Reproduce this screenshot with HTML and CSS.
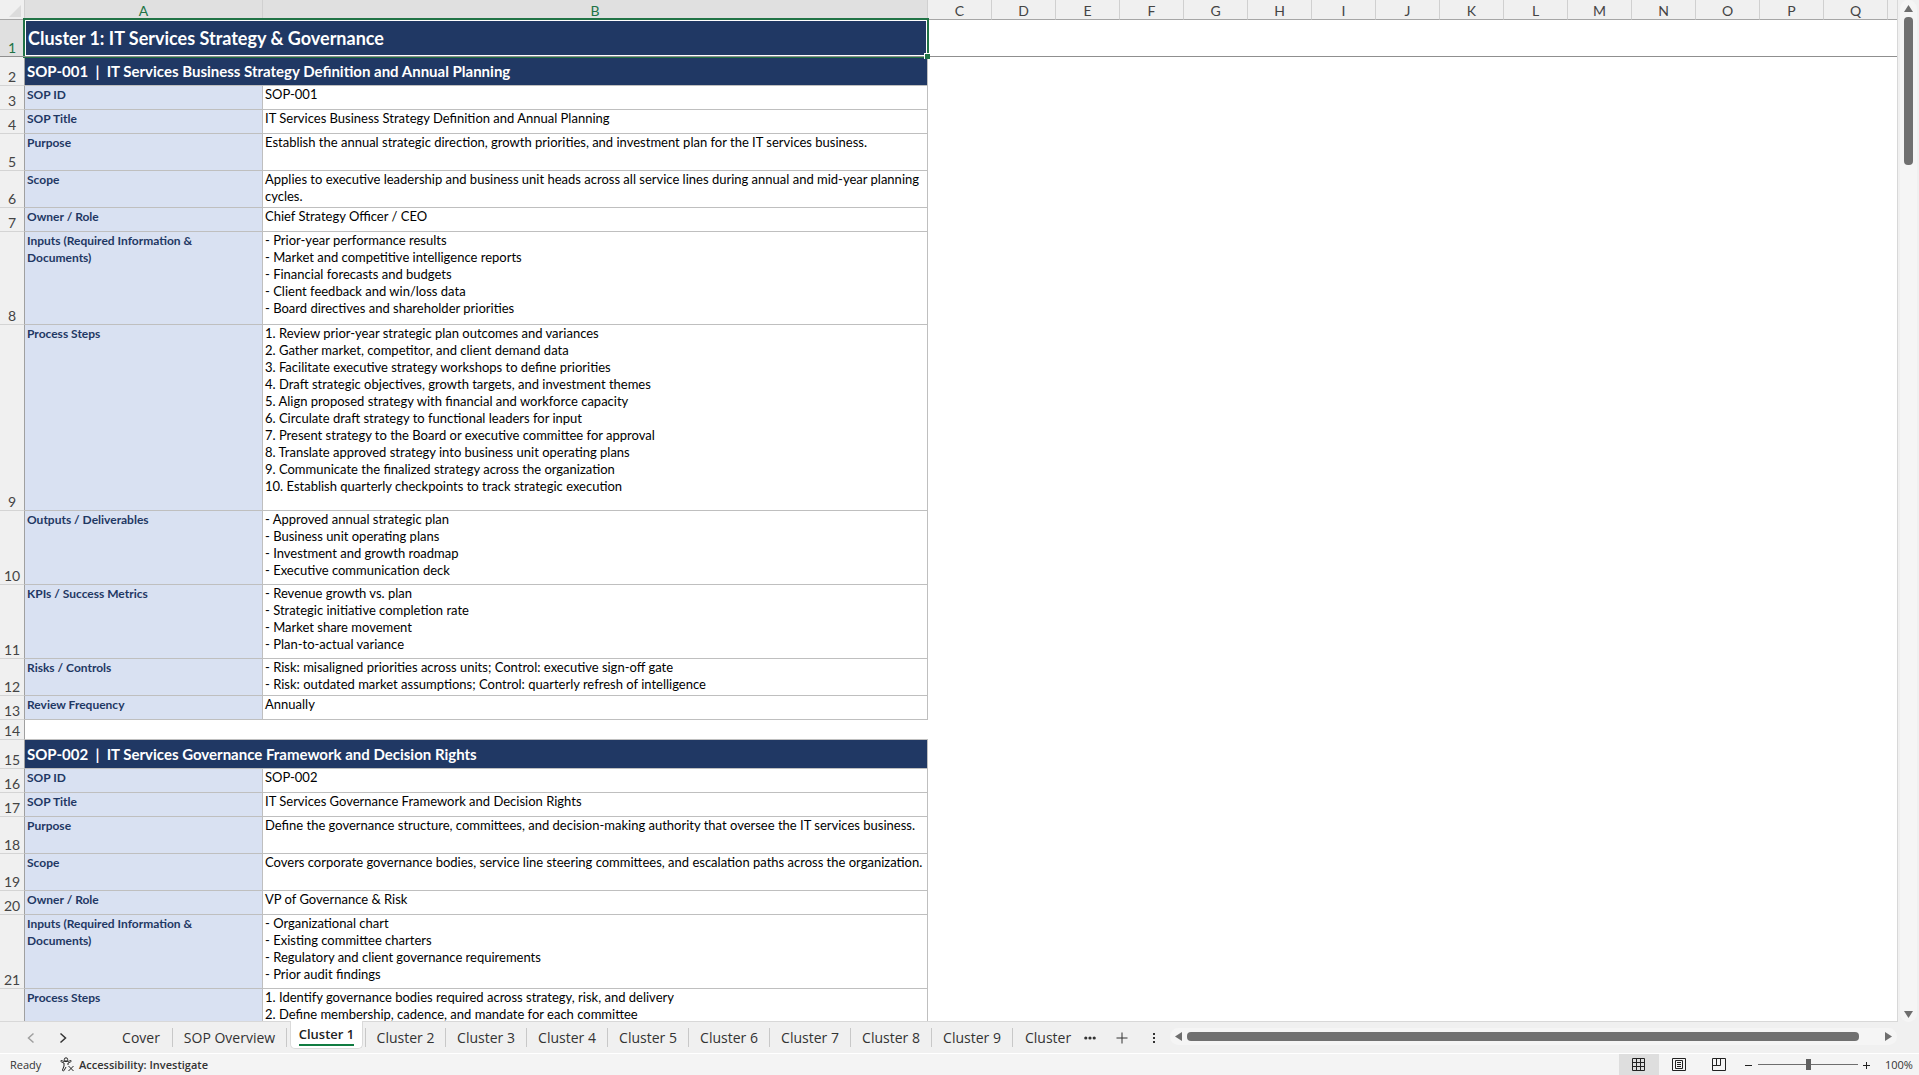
FILE: index.html
```html
<!DOCTYPE html>
<html lang="en">
<head>
    <meta charset="UTF-8">
    <meta name="viewport" content="width=device-width, initial-scale=1.0">
    <title>SOP Workbook</title>
    <link rel="stylesheet" href="styles.css">
</head>
<body>
    <main class="workspace">
        <div class="grid">
            <table class="sheet">
                <colgroup>
                    <col class="col-rows">
                    <col class="col-a">
                    <col class="col-b">
                    <col class="col-std" span="15">
                    <col>
                </colgroup>
                <thead>
                    <tr>
                        <th class="corner"><svg width="12" height="12" viewBox="0 0 12 12"><path d="M12 0v12H0z" fill="#dcdcdc"/></svg></th>
                        <th class="selected">A</th>
                        <th class="selected">B</th>
                        <th>C</th><th>D</th><th>E</th><th>F</th><th>G</th>
                        <th>H</th><th>I</th><th>J</th><th>K</th><th>L</th>
                        <th>M</th><th>N</th><th>O</th><th>P</th><th>Q</th>
                        <th class="last"></th>
                    </tr>
                </thead>
                <tbody>
                    <tr class="title-row">
                        <th class="selected">1</th>
                        <td class="title" colspan="2">Cluster 1: IT Services Strategy &amp; Governance<span class="selection"></span><span class="fill-handle"></span></td>
                        <td class="frozen" colspan="16"></td>
                    </tr>
                    <tr class="sop-row"><th>2</th><td class="sop" colspan="2">SOP-001&nbsp; |&nbsp; IT Services Business Strategy Definition and Annual Planning</td></tr>
                    <tr class="lines-1"><th>3</th><td class="label">SOP ID</td><td>SOP-001</td></tr>
                    <tr class="lines-1"><th>4</th><td class="label">SOP Title</td><td>IT Services Business Strategy Definition and Annual Planning</td></tr>
                    <tr class="lines-2"><th>5</th><td class="label">Purpose</td><td>Establish the annual strategic direction, growth priorities, and investment plan for the IT services business.</td></tr>
                    <tr class="lines-2"><th>6</th><td class="label">Scope</td><td>Applies to executive leadership and business unit heads across all service lines during annual and mid-year planning cycles.</td></tr>
                    <tr class="lines-1"><th>7</th><td class="label">Owner / Role</td><td>Chief Strategy Officer / CEO</td></tr>
                    <tr class="lines-5">
                        <th>8</th>
                        <td class="label">Inputs (Required Information &amp;<br>Documents)</td>
                        <td>- Prior-year performance results<br>
                            - Market and competitive intelligence reports<br>
                            - Financial forecasts and budgets<br>
                            - Client feedback and win/loss data<br>
                            - Board directives and shareholder priorities</td>
                    </tr>
                    <tr class="lines-10">
                        <th>9</th>
                        <td class="label">Process Steps</td>
                        <td>1. Review prior-year strategic plan outcomes and variances<br>
                            2. Gather market, competitor, and client demand data<br>
                            3. Facilitate executive strategy workshops to define priorities<br>
                            4. Draft strategic objectives, growth targets, and investment themes<br>
                            5. Align proposed strategy with financial and workforce capacity<br>
                            6. Circulate draft strategy to functional leaders for input<br>
                            7. Present strategy to the Board or executive committee for approval<br>
                            8. Translate approved strategy into business unit operating plans<br>
                            9. Communicate the finalized strategy across the organization<br>
                            10. Establish quarterly checkpoints to track strategic execution</td>
                    </tr>
                    <tr class="lines-4">
                        <th>10</th>
                        <td class="label">Outputs / Deliverables</td>
                        <td>- Approved annual strategic plan<br>
                            - Business unit operating plans<br>
                            - Investment and growth roadmap<br>
                            - Executive communication deck</td>
                    </tr>
                    <tr class="lines-4">
                        <th>11</th>
                        <td class="label">KPIs / Success Metrics</td>
                        <td>- Revenue growth vs. plan<br>
                            - Strategic initiative completion rate<br>
                            - Market share movement<br>
                            - Plan-to-actual variance</td>
                    </tr>
                    <tr class="lines-2">
                        <th>12</th>
                        <td class="label">Risks / Controls</td>
                        <td>- Risk: misaligned priorities across units; Control: executive sign-off gate<br>
                            - Risk: outdated market assumptions; Control: quarterly refresh of intelligence</td>
                    </tr>
                    <tr class="lines-1"><th>13</th><td class="label">Review Frequency</td><td>Annually</td></tr>
                    <tr class="blank-row"><th>14</th><td class="blank" colspan="2"></td></tr>
                    <tr class="sop-row"><th>15</th><td class="sop" colspan="2">SOP-002&nbsp; |&nbsp; IT Services Governance Framework and Decision Rights</td></tr>
                    <tr class="lines-1"><th>16</th><td class="label">SOP ID</td><td>SOP-002</td></tr>
                    <tr class="lines-1"><th>17</th><td class="label">SOP Title</td><td>IT Services Governance Framework and Decision Rights</td></tr>
                    <tr class="lines-2"><th>18</th><td class="label">Purpose</td><td>Define the governance structure, committees, and decision-making authority that oversee the IT services business.</td></tr>
                    <tr class="lines-2"><th>19</th><td class="label">Scope</td><td>Covers corporate governance bodies, service line steering committees, and escalation paths across the organization.</td></tr>
                    <tr class="lines-1"><th>20</th><td class="label">Owner / Role</td><td>VP of Governance &amp; Risk</td></tr>
                    <tr class="lines-4">
                        <th>21</th>
                        <td class="label">Inputs (Required Information &amp;<br>Documents)</td>
                        <td>- Organizational chart<br>
                            - Existing committee charters<br>
                            - Regulatory and client governance requirements<br>
                            - Prior audit findings</td>
                    </tr>
                    <tr class="lines-10">
                        <th></th>
                        <td class="label">Process Steps</td>
                        <td>1. Identify governance bodies required across strategy, risk, and delivery<br>
                            2. Define membership, cadence, and mandate for each committee</td>
                    </tr>
                </tbody>
            </table>
        </div>
        <div class="scroll-v">
            <button class="scroll-btn" aria-label="Scroll up"><svg width="9" height="8" viewBox="0 0 9 8"><path d="M4.500 0 9 7H0z"/></svg></button>
            <div class="thumb-v"></div>
            <button class="scroll-btn scroll-down" aria-label="Scroll down"><svg width="9" height="8" viewBox="0 0 9 8"><path d="M0 1h9L4.500 8z"/></svg></button>
        </div>
    </main>

    <nav class="tab-bar">
        <div class="tab-nav">
            <button aria-label="Previous sheet" class="muted"><svg width="8" height="12" viewBox="0 0 8 12"><path d="M6.500 1.500 1.500 6l5 4.500"/></svg></button>
            <button aria-label="Next sheet"><svg width="8" height="12" viewBox="0 0 8 12"><path d="M1.500 1.500l5 4.500-5 4.500"/></svg></button>
        </div>
        <div class="tabs">
            <button class="tab tab-cover">Cover</button>
            <button class="tab tab-overview">SOP Overview</button>
            <button class="tab active"><span>Cluster 1</span></button>
            <button class="tab">Cluster 2</button>
            <button class="tab">Cluster 3</button>
            <button class="tab">Cluster 4</button>
            <button class="tab">Cluster 5</button>
            <button class="tab">Cluster 6</button>
            <button class="tab">Cluster 7</button>
            <button class="tab">Cluster 8</button>
            <button class="tab">Cluster 9</button>
            <button class="tab cut">Cluster 10</button>
        </div>
        <div class="tab-tools">
            <button aria-label="More sheets"><svg width="12" height="12" viewBox="0 0 12 12"><g fill="#333"><circle cx="1.800" cy="6" r="1.600"/><circle cx="6" cy="6" r="1.600"/><circle cx="10.200" cy="6" r="1.600"/></g></svg></button>
            <button aria-label="New sheet"><svg width="12" height="12" viewBox="0 0 12 12"><path d="M6 .5v11M.5 6h11"/></svg></button>
            <button aria-label="Resize tabs"><svg width="4" height="12" viewBox="0 0 4 12"><g fill="#333"><path d="M1 1h2v2H1zM1 5h2v2H1zM1 9h2v2H1z"/></g></svg></button>
        </div>
        <div class="scroll-h">
            <button class="scroll-btn" aria-label="Scroll left"><svg width="7" height="9" viewBox="0 0 7 9"><path d="M7 0v9L0 4.500z"/></svg></button>
            <div class="thumb-h"></div>
            <button class="scroll-btn" aria-label="Scroll right"><svg width="7" height="9" viewBox="0 0 7 9"><path d="M0 0l7 4.500L0 9z"/></svg></button>
        </div>
    </nav>

    <footer class="status-bar">
        <span class="ready">Ready</span>
        <button class="accessibility">
            <svg width="15" height="15" viewBox="0 0 15 15"><circle cx="6" cy="2.500" r="1.700"/><path d="M1 3.500c-.6.900 0 1.500 3 2.500v3l-1.500 4c0 1.200 1.200 1.200 1.700.3L6 10M11 3.500c.6.900 0 1.500-3 2.500v2M1 3.500c1 0 2 1 5 1s4-1 5-1M8.500 9l5 5M13.500 9l-5 5"/></svg>
            Accessibility: Investigate
        </button>
        <div class="views">
            <button class="current" aria-label="Normal view"><svg width="14" height="14" viewBox="0 0 14 14"><path d="M.5.5h12v12H.5zM4.500.5v12M8.500.5v12M.5 4.500h12M.5 8.500h12"/></svg></button>
            <button aria-label="Page layout view"><svg width="14" height="14" viewBox="0 0 14 14"><path d="M.5.5h13v12H.5zM3.500 2.500h7v8h-7zM5 4.500h4M5 6.500h4M5 8.500h4"/></svg></button>
            <button aria-label="Page break view"><svg width="14" height="14" viewBox="0 0 14 14"><path d="M.5.5h13v12H.5zM4.500.5v7M.5 7.500h8v-7"/></svg></button>
        </div>
        <div class="zoom">
            <button aria-label="Zoom out"><svg width="8" height="8" viewBox="0 0 8 8"><path d="M0 4.500h7"/></svg></button>
            <input type="range" min="0" max="100" value="50" aria-label="Zoom">
            <button aria-label="Zoom in"><svg width="8" height="8" viewBox="0 0 8 8"><path d="M0 4.500h7M3.500 1v7"/></svg></button>
            <span class="zoom-value">100%</span>
        </div>
    </footer>
</body>
</html>
```
FILE: styles.css
```css
* {
    box-sizing: border-box;
}

body {
    margin: 0;
    height: 100vh;
    display: flex;
    flex-direction: column;
    overflow: hidden;
    background-color: #f0f0f0;
    color: #000;
    font-family: Lato, "Liberation Sans", sans-serif;
    font-size: 13px;
}

button {
    display: flex;
    align-items: center;
    justify-content: center;
    padding: 0;
    border: 0;
    background: none;
    color: inherit;
    font: inherit;
}

svg {
    flex: none;
}

.workspace {
    flex: 1;
    min-height: 0;
    display: flex;
}

.grid {
    flex: 1;
    min-width: 0;
    overflow: hidden;
    background-color: white;
    border-right: 1px solid #d8d8d8;
    border-bottom: 1px solid #d8d8d8;
}

/* sheet */
.sheet {
    width: 100%;
    table-layout: fixed;
    border-collapse: separate;
    border-spacing: 0;
}

.col-rows {
    width: 25px;
}

.col-a {
    width: 238px;
}

.col-b {
    width: 665px;
}

.col-std {
    width: 64px;
}

th {
    padding: 0;
    background-color: #f0f0f0;
    color: #444;
    font-size: 14px;
    line-height: 16px;
    font-weight: normal;
}

thead th {
    height: 20px;
    padding-top: 2px;
    border-right: 1px solid #d0d0d0;
    border-bottom: 1px solid #a6a6a6;
}

thead .last {
    border-right: 0;
}

thead .corner {
    line-height: 0;
    text-align: right;
    padding: 2px 3px 0 0;
}

tbody th {
    border-right: 1px solid #a0a0a0;
    border-bottom: 1px solid #d4d4d4;
    vertical-align: bottom;
}

th.selected {
    background-color: #e0e0e0;
    color: #217346;
}

td {
    padding: 0 2px;
    border-right: 1px solid #bfbfbf;
    border-bottom: 1px solid #bfbfbf;
    line-height: 17px;
    vertical-align: top;
}

.label {
    background-color: #d9e1f2;
    color: #1f3864;
    font-size: 12px;
    font-weight: bold;
}

.title,
.sop {
    background-color: #203864;
    color: white;
    font-weight: bold;
    vertical-align: middle;
}

.title {
    position: relative;
    padding: 0 3px;
    font-size: 18px;
}

.sop {
    font-size: 15px;
}

.title-row th,
.title-row td {
    height: 37px;
    border-bottom-color: #8f8f8f;
}

.frozen,
.blank {
    border-right: 0;
}

.selection {
    position: absolute;
    inset: -2px -2px 0 -2px;
    border: 2px solid #217346;
    border-bottom: 0;
    box-shadow: inset 0 0 0 1px white, 0 1px 0 #8f8f8f, 0 2px 0 #217346;
}

.fill-handle {
    position: absolute;
    right: -3px;
    bottom: -3px;
    width: 6px;
    height: 6px;
    background-color: #217346;
    border-top: 1px solid white;
    border-left: 1px solid white;
}

.sop-row {
    height: 29px;
}

.blank-row {
    height: 20px;
}

.lines-1 {
    height: 24px;
}

.lines-2 {
    height: 37px;
}

.lines-4 {
    height: 74px;
}

.lines-5 {
    height: 93px;
}

.lines-10 {
    height: 186px;
}

/* scrollbars */
.scroll-v,
.scroll-h {
    display: flex;
    background-color: #f5f5f5;
    border-radius: 9px;
}

.scroll-v {
    flex-direction: column;
    align-items: center;
    width: 17px;
    margin: 0 2px;
}

.scroll-btn {
    flex: none;
    fill: #6e6e6e;
}

.scroll-v .scroll-btn {
    width: 17px;
    height: 17px;
}

.scroll-v .scroll-down {
    margin-top: auto;
}

.thumb-v {
    width: 9px;
    height: 148px;
    border-radius: 4px;
    background-color: #707070;
}

/* sheet tabs */
.tab-bar {
    display: flex;
    height: 31px;
    color: #333;
    font-family: "Open Sans", "Noto Sans", sans-serif;
    font-size: 14px;
    stroke: #333;
    stroke-width: 1;
    fill: none;
}

.tab-nav {
    display: flex;
    width: 94px;
    padding-left: 15px;
}

.tab-nav button {
    width: 32px;
    stroke-width: 1.5;
}

.tab-nav .muted {
    stroke: #a0a0a0;
}

.tabs {
    display: flex;
    align-items: center;
}

.tab {
    width: 81px;
    height: 19px;
    border-right: 1px solid #c8c8c8;
    white-space: nowrap;
}

.tab-cover {
    width: 79px;
    padding-left: 16px;
}

.tab-overview {
    width: 114px;
}

/* overlaps the bottom line of the grid */
.tab.active {
    position: relative;
    align-self: flex-start;
    width: 73px;
    height: 28px;
    margin: -1px 2px 0 3px;
    border: 1px solid #dadada;
    border-top: 0;
    border-radius: 0 0 5px 5px;
    background-color: white;
    color: #222;
    font-weight: 600;
}

.active + .tab {
    border-left: 1px solid #c8c8c8;
}

.active span {
    border-bottom: 2px solid #107c41;
    font-size: 13px;
    line-height: 20px;
}

.tab.cut {
    justify-content: flex-start;
    width: 61px;
    padding-left: 12px;
    border-right: 0;
    overflow: hidden;
}

.tab-tools {
    display: flex;
    flex: none;
}

.tab-tools button {
    width: 32px;
}

.tab-tools g {
    stroke: none;
}

.scroll-h {
    flex: 1;
    align-items: center;
    height: 17px;
    margin: 6px 22px 0 0;
    stroke: none;
}

.scroll-h .scroll-btn {
    width: 17px;
    height: 17px;
}

.thumb-h {
    flex: 1;
    height: 9px;
    margin-right: 21px;
    border-radius: 4px;
    background-color: #707070;
}

/* status bar */
.status-bar {
    display: flex;
    align-items: center;
    height: 22px;
    border-top: 1px solid white;
    background-color: #f4f4f4;
    color: #333;
    font-family: "Open Sans", "Noto Sans", sans-serif;
    font-size: 11px;
    stroke-width: 1;
    fill: none;
}

.status-bar svg {
    stroke: #222;
}

.ready {
    width: 50px;
    padding-left: 10px;
}

.accessibility {
    gap: 4px;
    margin-left: 10px;
    font-weight: 600;
}

.views {
    display: flex;
    align-self: stretch;
    margin-left: auto;
}

.views button {
    width: 40px;
}

.views .current {
    background-color: #dedede;
}

.zoom {
    display: flex;
    align-items: center;
    width: 180px;
    padding-left: 6px;
}

.zoom input {
    appearance: none;
    width: 100px;
    height: 12px;
    margin: 0 5px;
    background: linear-gradient(#6e6e6e, #6e6e6e) center / 100% 1px no-repeat;
}

.zoom input::-webkit-slider-thumb {
    appearance: none;
    width: 5px;
    height: 11px;
    background-color: #606060;
}

.zoom-value {
    margin-left: 14px;
}
```
